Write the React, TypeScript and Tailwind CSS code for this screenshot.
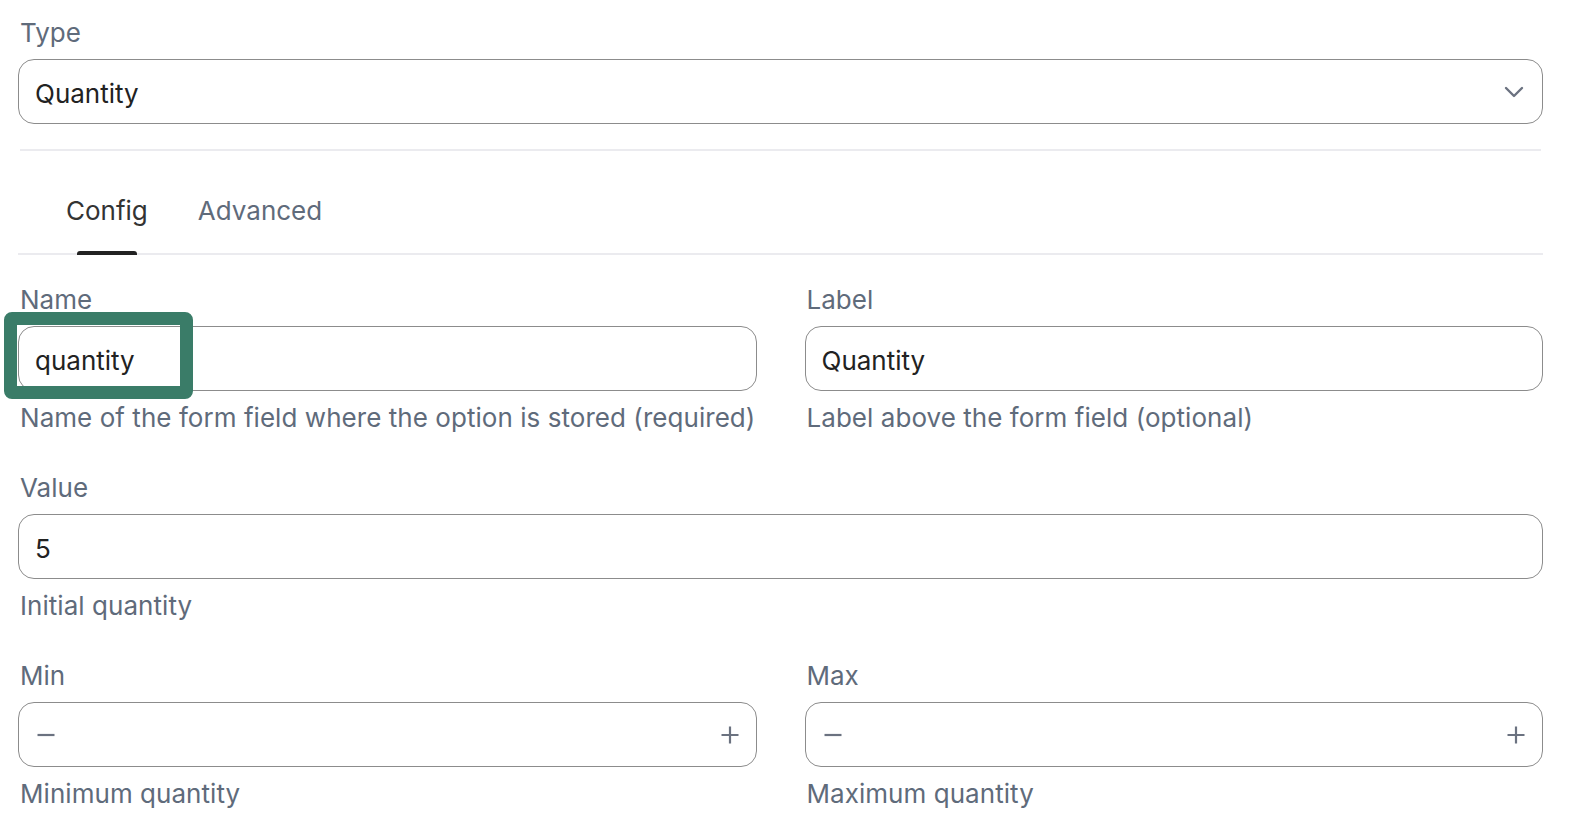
import React from "react";

const font = { fontFamily: "Inter, 'Noto Sans', sans-serif" };

function FieldLabel({ children }: { children: React.ReactNode }) {
  return <div className="text-[26px] leading-[36px] text-[#5f6b7b] pl-[2px] mb-[8px]">{children}</div>;
}

function Help({ children }: { children: React.ReactNode }) {
  return <div className="text-[26px] leading-[36px] text-[#5f6b7b] pl-[2px] mt-[9px] tracking-[0.05px]">{children}</div>;
}

function TextInput({ value }: { value: string }) {
  return (
    <div className="h-[65px] flex items-center border border-[#8c8c8c] rounded-[16px] px-[16px] pt-[3px] bg-white">
      <span className="text-[26px] text-[#222222]">{value}</span>
    </div>
  );
}

function Stepper() {
  return (
    <div className="h-[65px] flex items-center justify-between border border-[#8c8c8c] rounded-[16px] pl-[18px] pr-[17px] bg-white">
      <svg width="18" height="18" viewBox="0 0 18 18" className="text-[#6b7280]">
        <path d="M0.5 9h17" stroke="currentColor" strokeWidth="2.2" />
      </svg>
      <svg width="18" height="18" viewBox="0 0 18 18" className="text-[#6b7280]">
        <path d="M0.5 9h17M9 0.5v17" stroke="currentColor" strokeWidth="2.2" />
      </svg>
    </div>
  );
}

export default function App() {
  return (
    <div className="w-[1572px] h-[832px] bg-white overflow-hidden pl-[18px] pr-[29px] pt-[15px]" style={font}>
      {/* Type select */}
      <FieldLabel>Type</FieldLabel>
      <div className="h-[65px] flex items-center justify-between border border-[#8c8c8c] rounded-[16px] pl-[16px] pr-[18px]">
        <span className="text-[26px] text-[#222222] pt-[3px]">Quantity</span>
        <svg width="20" height="12" viewBox="0 0 20 12" className="text-[#6b7280]">
          <path d="M2 2l8 8 8-8" fill="none" stroke="currentColor" strokeWidth="2.4" strokeLinecap="round" strokeLinejoin="round" />
        </svg>
      </div>

      <div className="mt-[25px] mx-[2px] h-[2px] bg-[#ebebef]" />

      {/* Tabs */}
      <div className="mt-[42px] flex gap-[50px] pl-[48px] border-b-2 border-[#ebebef]">
        <div className="relative pb-[24px] text-[26px] leading-[36px] text-[#333333]">
          Config
          <div className="absolute left-1/2 -translate-x-1/2 -bottom-[2px] w-[60px] h-[4px] bg-[#222222] rounded-t-[3px]" />
        </div>
        <div className="pb-[24px] text-[26px] leading-[36px] text-[#5f6b7b]">Advanced</div>
      </div>

      <div className="mt-[27px] flex flex-col gap-[34px]">
        <div className="grid grid-cols-2 gap-x-[48px]">
          <div>
            <FieldLabel>Name</FieldLabel>
            <div className="relative">
              <TextInput value="quantity" />
              <div className="absolute -left-[14px] -top-[14px] w-[189px] h-[87px] border-[13px] border-[#3a7c68] rounded-[8px]" />
            </div>
            <Help>Name of the form field where the option is stored (required)</Help>
          </div>
          <div>
            <FieldLabel>Label</FieldLabel>
            <TextInput value="Quantity" />
            <Help>Label above the form field (optional)</Help>
          </div>
        </div>

        <div>
          <FieldLabel>Value</FieldLabel>
          <TextInput value="5" />
          <Help>Initial quantity</Help>
        </div>

        <div className="grid grid-cols-2 gap-x-[48px]">
          <div>
            <FieldLabel>Min</FieldLabel>
            <Stepper />
            <Help>Minimum quantity</Help>
          </div>
          <div>
            <FieldLabel>Max</FieldLabel>
            <Stepper />
            <Help>Maximum quantity</Help>
          </div>
        </div>
      </div>
    </div>
  );
}
